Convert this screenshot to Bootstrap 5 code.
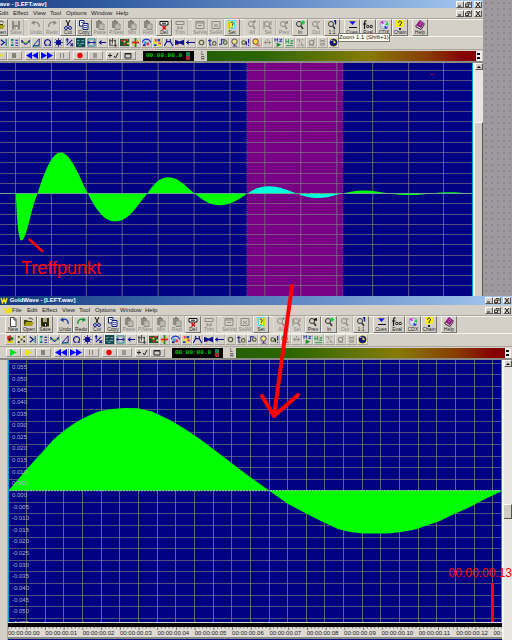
<!DOCTYPE html>
<html lang="en">
<head>
<meta charset="utf-8">
<meta name="viewport" content="width=device-width, initial-scale=1">
<title>GoldWave - [LEFT.wav]</title>
<link href="https://cdn.jsdelivr.net/npm/bootstrap@5.3.0/dist/css/bootstrap.min.css" rel="stylesheet">
<style>
  :root { --face: #d4d0c8; --ink: #222; --navy: #000082; }
  body { background: #9c9a9c; font-family: "Liberation Sans", Arial, sans-serif; font-size: 6px; line-height: 8px; color: var(--ink); }
  button { font: inherit; color: inherit; padding: 0; border: 0; background: none; }
  svg { display: block; }
  .desk { background: #9c9a9c radial-gradient(circle, #8b898d 1px, transparent 1px) 0 0 / 6px 6px; }
  .edge-strip { flex: 0 0 29px; }
  .app { background: var(--face); }
  .app-back { margin-left: -29px; }
  .caption-bar { height: 9px; background: linear-gradient(90deg, #163a7c, #3560a4 30%, #6c92cc 65%, #a6caf0); color: #fff; font-weight: 700; line-height: 9px; }
  .app-back .caption-bar { height: 8px; line-height: 7px; }
  .menu-bar { height: 10px; line-height: 10px; }
  .menu-bar a { color: var(--ink); text-decoration: none; }
  .menu-w15 { width: 15px; }
  .menu-w16 { width: 16px; }
  .menu-w17 { width: 17px; }
  .menu-w20 { width: 20px; }
  .menu-w25 { width: 25px; }
  .win-set { margin-right: 1px; }
  .win-btn { width: 8px; height: 7px; background: var(--face); border: 1px solid #fff; border-right-color: #555; border-bottom-color: #555; }
  .win-gap { margin-right: 2px; }
  .tool-bar { height: 18px; border-top: 1px solid #aaa69e; box-shadow: inset 0 1px #f6f4ee; padding: 0 0 0 5px; }
  .tool-gap { margin-left: 4px; }
  .tool { width: 16px; height: 17px; font-size: 5px; line-height: 5px; border: 1px solid #f2f0ea; border-right-color: #77746e; border-bottom-color: #77746e; white-space: nowrap; }
  .tool svg { width: 10px; height: 10px; }
  .tool span { margin: 0 -2px; }
  .tool:disabled { color: #85827c; border-color: #dedbd3; border-right-color: #bab7af; }
  .fx-bar { height: 13px; padding-left: 5px; border-top: 1px solid #f6f4ee; }
  .fx { width: 11px; height: 11px; border: 1px solid #ebe8e0; border-right-color: #b5b2ab; border-bottom-color: #a5a29b; }
  .fx svg { width: 9px; height: 9px; }
  .play-bar { height: 12px; border-top: 1px solid #aaa69e; padding-left: 6px; }
  .deck-group { margin-right: 3px; }
  .deck { width: 15px; height: 9px; border: 1px solid #f6f4ee; border-right-color: #96928b; border-bottom-color: #96928b; }
  .deck svg { width: 12px; height: 7px; }
  .lcd { width: 51px; height: 10px; background: #000; color: #00d800; font: 700 6px/10px "Liberation Mono", monospace; padding-left: 3px; }
  .lamp { width: 4px; height: 4px; }
  .channel { width: 13px; padding-left: 7px; font-size: 5px; line-height: 5px; }
  .meter { height: 10px; background: linear-gradient(90deg, #255f05, #2b6603 20%, #697600 48%, #867a00 60%, #873d00 82%, #850000 96%); }
  .rule-dark { height: 2px; background: #8b8985; }
  .gutter { flex: 0 0 8px; background: #d4d0c8; border-right: 1px solid #aaa69e; }
  .canvas-view { background: var(--navy); border-left: 1px solid #00a0d8; border-right: 1px solid #00a0d8; }
  .app-back .canvas-view svg { height: 233px; }
  .app-front .canvas-view svg { height: 262px; }
  .scroller { flex: 0 0 10px; background: #e8e6e0; border-left: 2px solid #f8f8f6; }
  .scroll-up { width: 8px; height: 7px; background: var(--face); border: 1px solid #fff; border-right-color: #555; border-bottom-color: #555; }
  .thumb { background: #d0cdc5; border-right: 1px solid #55534f; border-top: 1px solid #fafafa; }
  .thumb-back { margin-top: 52px; }
  .thumb-front { margin-top: 136px; height: 15px; border-bottom: 1px solid #55534f; }
  .scale-axis { left: 3px; top: 2px; color: #aeb2c8; line-height: 11px; height: 267px; }
  .black-bar { height: 5px; background: #000; border-top: 1px solid #ddd; }
  .ruler { height: 10px; background: #dedbd5; }
  .ruler svg { height: 3px; }
  .ruler-labels { display: grid; grid-template-columns: repeat(14, 7.56%); line-height: 7px; height: 7px; }
  .ruler-labels span { white-space: nowrap; }
  .base-line { height: 1px; background: var(--navy); }
  .tip { left: 338px; top: 33px; background: #fcfcec; border: 1px solid #777; line-height: 7px; white-space: nowrap; }
  .note { color: #f00; white-space: nowrap; }
  .note-hit { left: 21px; top: 258px; font-size: 18px; line-height: 20px; }
  .note-time { right: 0; bottom: 60px; font-size: 12px; line-height: 14px; }
</style>
<script src="https://cdn.jsdelivr.net/npm/bootstrap@5.3.0/dist/js/bootstrap.bundle.min.js"></script>
</head>
<body>
<main class="position-relative overflow-hidden">
  <section class="d-flex overflow-hidden" aria-label="Background window">
    <div class="app app-back flex-grow-1 d-flex flex-column">
      <div data-chrome="back"></div>
      <div class="d-flex">
        <div class="gutter"></div>
        <div class="canvas-view flex-grow-1">
          <svg class="w-100" viewBox="-20 63 493 233" preserveAspectRatio="none" role="img" aria-label="Decaying waveform with selection">
            <rect x="247.500" y="63" width="96" height="233" fill="#780084"/>
            <g data-grid="-20.5 35.8 70.3 10.27"></g>
            <path fill="#0f0" d="M16 193.500C17 225 19 240 21.500 240.500C27 240 31 208 37.700 193.500C45 171 52 152.500 61 152.500C71 152.500 80 178 88 193.500C96 209 104 221.500 115.500 221.500C130 221.500 139 203 147.700 193.500C154 184 160 177.300 169 177.300C179 177.300 187 187 195 193.500C203 200 210 205.300 220 205.300C231 205.300 240 199 248 193.500Z"/>
            <path fill="#00ffdc" d="M248 193.500C256 188 262 186.300 270 186.300C281 186.300 289 191 298 193.500C306 197 312 198 319 198C329 198 336 195 343 193.500Z"/>
            <path fill="#0f0" d="M343 193.500C354 191 360 190.500 366 190.500S382 192 390 193.500C405 195.500 417 195.500 430 193.500C445 192.500 455 191.500 465 193.500Z"/>
            <path d="M-20 193.500H473" stroke="#5fb08a"/>
            <path d="M247.500 63V296M343.500 63V296" stroke="#9a309a" stroke-dasharray="1 1"/>
            <rect x="432" y="74" width="2" height="1" fill="red"/>
          </svg>
        </div>
        <div class="scroller d-flex flex-column">
          <button class="scroll-up" aria-label="Scroll up"><svg viewBox="0 0 6 5"><path d="M1 4H5L3 2Z"/></svg></button>
          <div class="thumb thumb-back flex-grow-1"></div>
        </div>
      </div>
    </div>
    <div class="desk edge-strip"></div>
  </section>

  <section class="app app-front" aria-label="Foreground window">
    <div data-chrome="front"></div>
    <div class="d-flex">
      <div class="gutter"></div>
      <div class="flex-grow-1">
        <div class="canvas-view position-relative overflow-hidden">
          <svg class="w-100" viewBox="9 360 492 262" preserveAspectRatio="none" role="img" aria-label="Zoomed waveform">
            <g data-grid="26.700 18.640 363.300 11.590"></g>
            <path fill="#0f0" d="M8.500 490.500L26 470L54 439L66 429L78 421L90 415L100 411L112 409L125 408L138 408.300L152 411.500L170 420L185 429L200 439L225 458L250 477L269 490.500L288 504L310 515.500L325 523L338 529L350 532L363 533.500L387 533.500L402 532L415 529.500L440 521L452 515L470 507L485 499L501 491.500V490.500Z"/>
            <path d="M9 490.700H501" stroke="#8fe08f" stroke-dasharray="2 1"/>
            <path d="M492.500 583V622" stroke="red" stroke-width="3"/>
          </svg>
          <div class="scale-axis position-absolute d-flex flex-column justify-content-between" id="levels"></div>
        </div>
        <div class="black-bar"></div>
        <div class="ruler overflow-hidden">
          <svg id="ticks" class="w-100" viewBox="9 0 492 3" preserveAspectRatio="none" aria-hidden="true"></svg>
          <div class="ruler-labels overflow-hidden" id="times"></div>
        </div>
        <div class="rule-dark"></div>
        <div class="base-line"></div>
      </div>
      <div class="scroller">
        <button class="scroll-up" aria-label="Scroll up"><svg viewBox="0 0 6 5"><path d="M1 4H5L3 2Z"/></svg></button>
        <div class="thumb thumb-front"></div>
      </div>
    </div>
  </section>

  <div class="tip position-absolute" role="tooltip">Zoom 1:1 (Shift+1)</div>
  <div class="note note-hit position-absolute">Treffpunkt</div>
  <div class="note note-time position-absolute">00.00.00.13</div>
  <svg class="position-absolute top-0 start-0 w-100 h-100 pe-none" viewBox="0 0 512 640" preserveAspectRatio="none" aria-hidden="true">
    <g stroke="red" fill="none" stroke-linecap="round" stroke-linejoin="round">
      <path stroke-width="4" d="M292 286L274 416M262 396L274 416L298 395"/>
      <path stroke-width="2.500" d="M29.500 239.500L42 251"/>
    </g>
  </svg>
</main>

<script>
const svg = (body, box = '0 0 10 10') => `<svg viewBox="${box}" fill="none" aria-hidden="true">${body}</svg>`;
const P = (d, stroke = '#222', extra = '') => `<path d="${d}" stroke="${stroke}" ${extra}/>`;
const F = (d, fill) => `<path d="${d}" fill="${fill}"/>`;
const lens = c => `<circle cx="4" cy="4" r="2.500" stroke="${c}"/>` + P('M6 6L8 9', c, 'stroke-width="1.500"');
const clip = c => F('M1 1H7V8H1Z', c) + F('M3 0H5V2H3Z', '#77756f') + `<path d="M4 4H9V9.500H4Z" fill="#d4d0c8" stroke="${c}"/>` + P('M5 6H8M5 8H8', c, 'stroke-width=".6"');
const G = '#8c8983';

const art = {
  New: () => '<path d="M2.500.5H6L8 2.500V9.500H2.500Z" fill="#fff" stroke="#222" stroke-width=".8"/>' + P('M6 .5V3H8', '#222', 'stroke-width=".8"'),
  Open: () => F('M0 3H3L4 4H8V9H0Z', '#444400') + F('M2 5H10L8 9H0Z', '#a8a018') + P('M5 2C6 0 8 1 8.500 3', '#222', 'stroke-width=".8"'),
  Save: off => F('M1 1H9V9.500H1Z', off ? G : '#333300') + F('M3 1H7V5H3Z', off ? '#c8c4bc' : '#a8a890') + F('M3 7H7V9.500H3Z', off ? '#b8b4ac' : '#111') + F('M5 7H6V9H5Z', '#eee'),
  Undo: off => P('M2 3C5 1 9 3 8 7', off ? G : '#2038a8', 'stroke-width="1.200"') + F('M0 3L3 .5L4 5Z', off ? G : '#2038a8'),
  Redo: off => P('M8 3C5 1 1 3 2 7', off ? G : '#119038', 'stroke-width="1.200"') + F('M10 3L7 .5L6 5Z', off ? G : '#119038'),
  Cut: () => P('M3 0L6 6M7 0L4 6', '#111') + '<circle cx="3" cy="8" r="1.500" stroke="#102090"/><circle cx="7" cy="8" r="1.500" stroke="#102090"/>',
  Copy: () => '<path d="M.5 .5H5V6H.5Z" fill="#fff" stroke="#102070"/><path d="M4 3.500H9V9.500H4Z" fill="#e8e8ff" stroke="#102070"/>' + P('M5 5.500H8M5 7.500H8M2 2.500H4', '#102070', 'stroke-width=".7"'),
  Paste: () => clip(G), 'P.New': () => clip(G), Mix: () => clip(G), Repl: () => clip(G),
  Del: () => '<path d="M1 1.500H9V5H1Z" fill="#fff" stroke="#111"/>' + P('M3 3.200H7', '#111') + P('M3.500 6L7 9.500M7 6L3.500 9.500', '#d00000', 'stroke-width="1.200"'),
  Trim: () => P('M1 1.500H9V4.500H1ZM3 6V9.500M7 6V9.500M3 8H7', G),
  SelVw: () => P('M1 1.500H9V8.500H1ZM1 3H9M3 5.500H7', G),
  SelAll: () => P('M1 1.500H9V8.500H1ZM3 4L7 7M7 4L3 7', G),
  Set: () => F('M1 0H9V9H1Z', '#58dce8') + F('M3 1H7V8H3Z', '#f8f860') + P('M1.500 1V9M8.500 1V9', '#e0e000') + P('M4 3C4 1 7 2 6 4L5 6M5 7V8', '#333'),
  All: () => lens(G) + P('M6 1.500H9M7.500 0V3', G), Sel: () => lens(G) + P('M1 1V9M8 1V5', G),
  Prev: off => lens(off ? G : '#333') + P('M6 2.500H9M8 1V4', off ? G : '#111', 'stroke-width="1.300"'),
  In: () => lens('#333') + P('M6 2.500H10M8 .5V4.500', '#00d030', 'stroke-width="1.500"'),
  Out: () => lens(G) + P('M6 2H9', G),
  '1:1': () => lens('#333') + P('M8.500 0V4.500M7 1H9', '#001898', 'stroke-width="1.300"'),
  Cues: () => F('M2 1H9L5.500 5Z', '#1010ff') + P('M2 7.500H10', '#111') + P('M2 1H9', '#eec800', 'stroke-width=".6"'),
  Eval: () => P('M3.500 1C1.500 0 1.500 2 1.500 9M0 4H3.500', '#111', 'stroke-width="1.200"') + '<circle cx="4.800" cy="6.500" r="1.200" stroke="#111"/><circle cx="8.200" cy="6.500" r="1.200" stroke="#111"/>',
  CDX: () => '<circle cx="5" cy="5" r="4" fill="#c8d8e0" stroke="#88a" stroke-width=".6"/>' + F('M5 5L1 2L4 1Z', '#e028e0') + F('M5 5L9 8L6 9Z', '#2030e0') + F('M5 5L9 2V5Z', '#20d050') + '<circle cx="5" cy="5" r="1" fill="#fff"/>',
  Chain: () => F('M1 0H9V6L6 7H1Z', '#f4f000') + P('M3.500 3C3.500 0 7 1 6.500 3L5 5V6', '#222') + F('M4 8H6V10H4Z', '#222'),
  Help: () => F('M1 5L5 0L9 3L6 8Z', '#8c1880') + P('M1 5V7L6 9.500L9 5V3', '#402040') + P('M5 2L7 3.500M4 4L6 5', '#f080d0', 'stroke-width=".8"')
};

const groups = [['New','Open','Save'],['Undo','Redo','Cut','Copy','Paste','P.New','Mix','Repl','Del','Trim'],['SelVw','SelAll','Set'],['All','Sel','Prev','In','Out','1:1'],['Cues','Eval','CDX','Chain'],['Help']];
const off = {
  front: ['Paste','P.New','Mix','Repl','Trim','SelVw','SelAll','All','Sel','Out'],
  back: ['Save','Undo','Redo','Paste','P.New','Mix','Repl','Trim','SelVw','SelAll','All','Sel','Prev','Out']
};

const B = '#101090', ring = c => `<circle cx="5" cy="5" r="2.500" stroke="${c}" stroke-width="1.300"/>`;
const fx = [
  ['Doppler', F('M1 2L5 0L6 5L2 6Z', '#e02020') + F('M5 1L9 4L6 7Z', '#108030') + F('M2 6H8V9H1Z', '#e8d000') + F('M3 4H5V7H3Z', '#222')],
  ['Dynamics', F('M1 1H3V3H1ZM7 1H9V3H7ZM4 4H6V6H4Z', '#555520') + F('M1 7H3V9H1ZM7 6H9V8H7Z', '#222') + F('M4 1H6V3H4ZM1 4H3V6H1Z', '#f0ec60')],
  ['Echo', P('M2 2L6 5L2 8', B, 'stroke-width="1.300"') + P('M8 1V9', '#117080', 'stroke-width="1.300"')],
  ['Filter', F('M1 1H4V3H1ZM1 7H4V9H1ZM2 4H3V6H2Z', '#108088') + F('M6 2H9V3H6ZM6 5H9V6H6ZM6 8H9V9H6Z', B)],
  ['Flange', P('M0 3C3 3 3 7 5 7S8 3 10 3', B, 'stroke-width="1.300"') + P('M0 5H10', '#109070') + F('M3 4H7V5H3Z', '#f0e020')],
  ['Fade', P('M1 9L8 1V8Z', B) + P('M1 9H9', '#108088')],
  ['Invert', P('M3 8C0 5 3 1 6 2S9 6 7 8M2 8H5M6 8H9', B, 'stroke-width="1.200"')],
  ['Mechanize', '<circle cx="5" cy="5" r="3" fill="#101090"/>' + P('M5 0V10M0 5H10M1.500 1.500L8.500 8.500M8.500 1.500L1.500 8.500', B, 'stroke-width=".8"')],
  ['Offset', P('M1 2H4M2.500 0V5M2 8L8 2M6 6L9 9M6 9L9 6', B, 'stroke-width="1.200"')],
  ['Parametric', F('M0 0H10V10H0Z', '#164850') + P('M1 3H4M6 3H9M1 6H3M5 6H9M3 8H6', '#78c8c0')],
  ['Pitch', P('M1 1H9V9H1Z', '#108088') + P('M1 5H9M3 3L1 5L3 7M7 3L9 5L7 7', B)],
  ['Reverse', P('M1 5H9M4 3L1.500 5L4 7', B, 'stroke-width="1.200"')],
  ['Noise', P('M1 1V9M4 0V6M7 2V10M2 8H9M0 3H8', '#444', 'stroke-width="1.200"') + P('M5 3V8M9 0V6', '#f0f0d0')],
  ['Spectrum', F('M0 1H10V9H0Z', '#185830') + F('M1 2H4V4H1ZM6 1H9V3H6ZM4 6H7V8H4Z', '#e02838') + F('M4 3H6V5H4ZM8 5H10V7H8Z', '#e8e850')],
  ['Pan', F('M4 0H6V10H4Z', '#109028') + F('M1 4H9V6H1Z', '#e02020') + F('M6 2H8V4H6ZM2 6H4V8H2Z', '#e8c000')],
  ['Stereo', P('M0 5C2 0 8 0 10 5', '#1030d0', 'stroke-width="1.300"') + F('M2 4H5V7H2Z', '#20a8e0') + F('M5 5H8V8H5Z', '#e03060') + F('M1 7H4V9H1Z', '#202080')],
  ['Equalizer', F('M1 1H9V9H1Z', '#e8df48') + F('M2 1H4V4H2ZM6 5H9V7H6Z', '#e03090') + F('M5 1H8V4H5ZM1 7H4V9H1Z', '#2040d0')],
  ['Shape', P('M0 9L3 4L7 4L10 9M3 1V4M7 1V4', B, 'stroke-width="1.200"')],
  ['Volume', F('M0 2L5 4L10 2V8L5 6L0 8Z', B) + F('M2 7H4V8H2Z', '#d02020')],
  ['Shift', P('M0 5H10M3 3L1 5L3 7', B, 'stroke-width="1.200"')],
  ['Maximize', ring('#506030')],
  ['Fade in', P('M2 1V8H4M0 3H4', B) + '<circle cx="7" cy="6" r="2" stroke="#506030" stroke-width="1.200"/>'],
  ['Fade out', P('M3 1V7H0M3 2H7', B) + '<circle cx="7" cy="5" r="2" stroke="#506030" stroke-width="1.200"/>'],
  ['Match', '<circle cx="5" cy="4" r="3" fill="#e8e870" stroke="#403070"/>' + P('M3 9H8M5 7V9', '#403070')],
  ['Change', '<circle cx="3" cy="5" r="2" stroke="#506030" stroke-width="1.200"/>' + P('M8.500 1V6M8.500 7.500V9M6 4V8', B, 'stroke-width="1.200"')],
  ['Auto gain', '<circle cx="4" cy="4" r="3" fill="#e8e040" stroke="#803030"/>' + P('M5 8H9', '#d02020')],
  ['Left', P('M1 5H9M3 3V7M7 3V7M5 1V3', G)],
  ['Playback rate', P('M1 0V4M4 0V4M1 2H4M6 1.500H9L6 4H9', '#1020b0', 'stroke-width=".8"') + F('M3 5L8 7.500L3 10Z', '#109028')],
  ['Resample', P('M1 1V6M4 1V6M1 4H4M6 3H9L6 6H9M1 8.500H9', '#109040', 'stroke-width=".9"')],
  ['Swap', P('M1 2H4V5M6 5V8H9M6 2H8M2 8H4', G)],
  ['Reduce', ring(G) + P('M2 8H8M8 1V3', G)],
  ['Remove', P('M2 2L8 4M8 2L2 4M3 6H7V8H3Z', G)],
  ['Timer', F('M0 0H10V10H0Z', '#e4dfa0') + '<circle cx="5" cy="5" r="4" fill="#101090" stroke="#222" stroke-width=".6"/>' + F('M5 2L8 5L5 6Z', '#f0e820') + F('M2 2H4V3H2Z', '#eee')]
];

const deckGroups = [
  [['Play', F('M3 0L10 3.500L3 7Z', '#00e020')], ['Play selection', F('M3 0L10 3.500L3 7Z', '#f0e800')], ['Stop', F('M4 1H8V6H4Z', '#85827c')]],
  [['Rewind', F('M6 0V7L0 3.500ZM12 0V7L6 3.500Z', '#0000f8')], ['Forward', F('M0 0V7L6 3.500ZM6 0V7L12 3.500Z', '#0000f8')], ['Pause', F('M4 1H5V6H4ZM7 1H8V6H7Z', '#85827c')]],
  [['Record', '<circle cx="6" cy="3.500" r="2.700" fill="#f00000"/>'], ['Stop recording', F('M4 1H8V6H4Z', '#9a9790')]],
  [['Properties', P('M1 3.500H5M3 1.500V5.500M7 4L8.500 6L11 1', '#222')], ['Window', P('M3 1.500H9V6H3ZM3 2H9', '#222')]]
];
const logo = '<svg width="8" height="7" viewBox="0 0 8 7" fill="none" aria-hidden="true"><path d="M1 1L2.500 6L4 2L5.500 6L7 1" stroke="#f0e000" stroke-width="1.500"/></svg>';
const winButtons = () => `<div class="win-set d-flex ms-auto align-items-center">
  <button class="win-btn" aria-label="Minimize">${svg(P('M1 4H4', '#111'), '0 0 6 5')}</button>
  <button class="win-btn win-gap" aria-label="Restore">${svg(P('M2 .5H5V3M.5 2H3.500V4.500H.5Z', '#111', 'stroke-width=".8"'), '0 0 6 5')}</button>
  <button class="win-btn" aria-label="Close">${svg(P('M1 0L5 5M5 0L1 5', '#111'), '0 0 6 5')}</button></div>`;

const chrome = kind => `
  <div class="caption-bar d-flex align-items-center overflow-hidden">${logo}<span>&nbsp;GoldWave - [LEFT.wav]</span>${winButtons()}</div>
  <nav class="menu-bar d-flex align-items-center" aria-label="Menu"><span class="ms-1">${logo}</span>
    ${[['File',15],['Edit',15],['Effect',20],['View',17],['Tool',16],['Options',25],['Window',25],['Help',15]].map(([t, w]) => `<a href="#" class="menu-w${w}">${t}</a>`).join('')}${winButtons()}</nav>
  <div class="tool-bar d-flex">${groups.map((g, i) => `<div class="d-flex ${i ? 'tool-gap' : ''}">${g.map(n => {
    const d = off[kind].includes(n);
    return `<button class="tool d-flex flex-column align-items-center" ${d ? 'disabled' : ''}>${svg(art[n](d))}<span>${n}</span></button>`; }).join('')}</div>`).join('')}</div>
  <div class="fx-bar d-flex">${fx.map(([n, b]) => `<button class="fx" aria-label="${n}">${svg(b)}</button>`).join('')}</div>
  <div class="play-bar d-flex align-items-center">${deckGroups.map(g => `<div class="d-flex deck-group">${g.map(([n, b]) => `<button class="deck" aria-label="${n}">${svg(b, '0 0 12 7')}</button>`).join('')}</div>`).join('')}
    <div class="lcd d-flex align-items-center ms-1">00:00:00.0<span class="ms-1"><span class="lamp d-block bg-success"></span><span class="lamp d-block bg-danger opacity-75"></span></span></div>
    <div class="channel">L<br>R</div><div class="meter flex-grow-1"></div>
    <svg width="7" height="10" viewBox="0 0 7 10" aria-hidden="true"><path fill="#eee" d="M0 0H6V10H0Z"/><path fill="#111" d="M1 2H4V4H1ZM1 6H4V8H1Z"/></svg></div>
  <div class="rule-dark"></div>`;

document.querySelectorAll('[data-chrome]').forEach(el => { el.innerHTML = chrome(el.dataset.chrome); });

/* grid lines: first x, x step, first y, y step */
document.querySelectorAll('[data-grid]').forEach(g => {
  const [x0, dx, y0, dy] = g.dataset.grid.split(' ').map(Number);
  let v = '', h = '';
  for (let x = x0; x < 501; x += dx) v += `M${Math.round(x - .5) + .5} 60V640`;
  for (let y = y0; y < 622; y += dy) h += `M-20 ${Math.round(y - .5) + .5}H520`;
  g.innerHTML = `<path d="${h}" stroke="#808080" stroke-opacity=".62"/><path d="${v}" stroke="#808080" stroke-opacity=".75"/>`;
});
document.getElementById('levels').innerHTML = Array.from({ length: 23 }, (_, i) => `<div>${((55 - i * 5) / 1000).toFixed(3)}</div>`).join('');
document.getElementById('times').innerHTML = Array.from({ length: 14 }, (_, i) => `<span>00:00:00.${String(i).padStart(2, '0')}</span>`).join('');
let ticks = '';
for (let i = 0; i < 133; i++) ticks += `M${9 + i * 3.728} 0V${i % 5 ? 1.5 : 3}`;
document.getElementById('ticks').innerHTML = `<path d="${ticks}" stroke="#77706c"/>`;
</script>
</body>
</html>
